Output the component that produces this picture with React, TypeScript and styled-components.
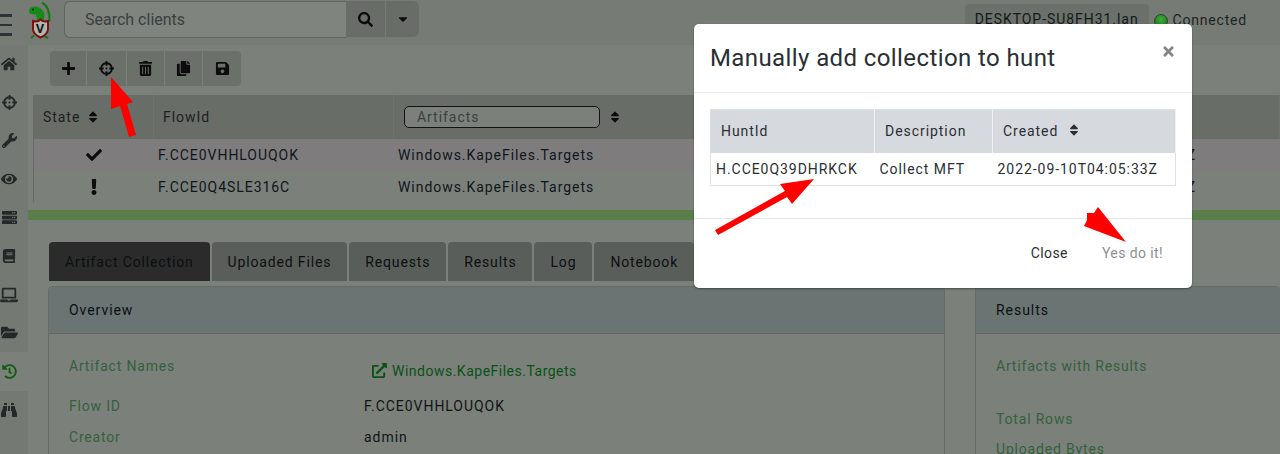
import React from "react";
import styled, { createGlobalStyle } from "styled-components";
import {
    FaBinoculars, FaBook, FaCaretDown, FaCheck, FaCopy, FaCrosshairs, FaExclamation,
    FaExternalLinkAlt, FaFolderOpen, FaHistory, FaHome, FaLaptop, FaPlus, FaSave, FaSearch,
    FaServer, FaSort, FaTimes, FaTrashAlt, FaWrench, FaEye,
} from "react-icons/fa";

const GlobalStyle = createGlobalStyle`
    html, body {
        margin: 0;
        height: 454px;
        overflow: hidden;
        background: #7b807b;
        font-family: Roboto, "Liberation Sans", sans-serif;
    }
    * { box-sizing: border-box; }
`;

const SIDE_ICONS = [
    { icon: FaHome, size: 16 },
    { icon: FaCrosshairs, size: 15 },
    { icon: FaWrench, size: 15 },
    { icon: FaEye, size: 16 },
    { icon: FaServer, size: 15 },
    { icon: FaBook, size: 14 },
    { icon: FaLaptop, size: 18 },
    { icon: FaFolderOpen, size: 17 },
    { icon: FaHistory, size: 15, active: true },
    { icon: FaBinoculars, size: 16 },
];

const TOOL_ICONS = [FaPlus, FaCrosshairs, FaTrashAlt, FaCopy, FaSave];
const TOOL_WIDTHS = [37, 40, 38, 38, 38];

const FLOWS = [
    { id: "F.CCE0VHHLOUQOK", icon: FaCheck, size: 16, selected: true },
    { id: "F.CCE0Q4SLE316C", icon: FaExclamation, size: 16, selected: false },
];

const TABS = [
    { label: "Artifact Collection", active: true },
    { label: "Uploaded Files" },
    { label: "Requests" },
    { label: "Results" },
    { label: "Log" },
    { label: "Notebook" },
];

const OVERVIEW = [
    { label: "Artifact Names", value: "", height: 40 },
    { label: "Flow ID", value: "F.CCE0VHHLOUQOK", height: 31 },
    { label: "Creator", value: "admin", height: 31 },
];

const Logo = () => (
    <svg width="24" height="40" viewBox="0 0 24 40">
        <path d="M14 2.5c5.5 3 8 9 7.500 19" fill="none" stroke="#137a13" strokeWidth="2" />
        <path d="M1 11c0-3 2.500-4.500 6-4.500 5 0 9 3.500 9.500 9l-1 4.500H9l-1-5.500c-4 0-7-.5-7-3.500z" fill="#168a16" />
        <circle cx="5" cy="9.500" r="1.100" fill="#0c2a0c" />
        <path d="M3 38l3-2.500M15 35.500l5 2.500" stroke="#137a13" strokeWidth="2" />
        <path d="M5 21c3 1 5.500 .5 7.500-1.500 2 2 4.500 2.500 7.500 1.500v8c0 3.500-3 6.500-7.500 8.500-4.500-2-7.500-5-7.500-8.500z" fill="#b4b4b0" stroke="#7d1010" strokeWidth="2" />
        <text x="12.500" y="33" textAnchor="middle" fontSize="13" fontWeight="700" fontFamily="Roboto" fill="#1a1a1a">V</text>
    </svg>
);

const Arrow = ({ points, left, top, w, h }: { points: string; left: number; top: number; w: number; h: number }) => (
    <ArrowBox width={w} height={h} $left={left} $top={top}>
        <polygon points={points} fill="#fe0000" />
    </ArrowBox>
);

const App: React.FunctionComponent = () => {
    return (
        <Page>
            <GlobalStyle />
            <TopBar>
                <Burger>
                    <BurgerLine />
                    <BurgerLine />
                    <BurgerLine />
                </Burger>
                <LogoSlot><Logo /></LogoSlot>
                <SearchBox>Search clients</SearchBox>
                <SearchButton><FaSearch size={15} /></SearchButton>
                <CaretButton><FaCaretDown size={14} /></CaretButton>
                <TopRight>
                    <HostChip>DESKTOP-SU8FH31.lan</HostChip>
                    <Dot />
                    <Status>Connected</Status>
                </TopRight>
            </TopBar>
            <Body>
                <SideBar>
                    {SIDE_ICONS.map((item, i) => (
                        <SideItem key={`side_${i}`} $active={item.active}>
                            <item.icon size={item.size} />
                        </SideItem>
                    ))}
                </SideBar>
                <Main>
                    <Toolbar>
                        {TOOL_ICONS.map((Icon, i) => (
                            <ToolButton key={`tool_${i}`} $width={TOOL_WIDTHS[i]}>
                                <Icon size={15} />
                            </ToolButton>
                        ))}
                    </Toolbar>
                    <FlowTable>
                        <HeadRow>
                            <HeadCell>State <SortIcon size={14} /></HeadCell>
                            <HeadCell>FlowId</HeadCell>
                            <FilterCell>
                                <FilterInput>Artifacts</FilterInput>
                                <SortIcon size={14} />
                            </FilterCell>
                        </HeadRow>
                        {FLOWS.map((flow) => (
                            <FlowRow key={flow.id} $selected={flow.selected}>
                                <StateCell><flow.icon size={flow.size} /></StateCell>
                                <Cell>{flow.id}</Cell>
                                <Cell>Windows.KapeFiles.Targets</Cell>
                                <TimeCell>2022-09-10T04:12:33Z</TimeCell>
                            </FlowRow>
                        ))}
                    </FlowTable>
                    <Splitter />
                    <Tabs>
                        {TABS.map((tab) => (
                            <Tab key={tab.label} $active={tab.active}>{tab.label}</Tab>
                        ))}
                    </Tabs>
                    <Cards>
                        <OverviewCard>
                            <CardHead>Overview</CardHead>
                            <CardBody>
                                {OVERVIEW.map((row) => (
                                    <InfoRow key={row.label} $height={row.height}>
                                        <InfoLabel>{row.label}</InfoLabel>
                                        {row.value ? (
                                            <InfoValue>{row.value}</InfoValue>
                                        ) : (
                                            <ArtifactLink>
                                                <FaExternalLinkAlt size={15} /> Windows.KapeFiles.Targets
                                            </ArtifactLink>
                                        )}
                                    </InfoRow>
                                ))}
                            </CardBody>
                        </OverviewCard>
                        <ResultsCard>
                            <CardHead>Results</CardHead>
                            <CardBody>
                                <InfoRow $height={53}><InfoLabel>Artifacts with Results</InfoLabel></InfoRow>
                                <InfoRow $height={30}><InfoLabel>Total Rows</InfoLabel></InfoRow>
                                <InfoRow $height={30}><InfoLabel>Uploaded Bytes</InfoLabel></InfoRow>
                            </CardBody>
                        </ResultsCard>
                    </Cards>
                </Main>
            </Body>

            <Modal>
                <ModalHead>
                    <ModalTitle>Manually add collection to hunt</ModalTitle>
                    <CloseX><FaTimes size={15} /></CloseX>
                </ModalHead>
                <ModalBody>
                    <HuntTable>
                        <thead>
                            <tr>
                                <HuntHead $width={164}>HuntId</HuntHead>
                                <HuntHead $width={118}>Description</HuntHead>
                                <HuntHead>Created <HuntSort size={14} /></HuntHead>
                            </tr>
                        </thead>
                        <tbody>
                            <tr>
                                <HuntCell>H.CCE0Q39DHRKCK</HuntCell>
                                <HuntCell>Collect MFT</HuntCell>
                                <HuntCell>2022-09-10T04:05:33Z</HuntCell>
                            </tr>
                        </tbody>
                    </HuntTable>
                </ModalBody>
                <ModalFoot>
                    <FootButton>Close</FootButton>
                    <FootButton $muted>Yes do it!</FootButton>
                </ModalFoot>
            </Modal>

            <Arrow left={105} top={70} w={34} h={70} points="6,7 28,32 22,34 31,65 24,67 15,36 6,39" />
            <Arrow left={712} top={170} w={104} h={70} points="102,9 80,34 75,27 6,65 3,60 73,21 68,14" />
            <Arrow left={1080} top={200} w={48} h={44} points="46,42 18,7 14,13 7,13 7,20 4,26" />
        </Page>
    );
};

const Page = styled.div`
    position: relative;
    width: 1280px;
    height: 454px;
    overflow: hidden;
    background: #7d827d;
    color: #111;
    letter-spacing: 0.95px;
`;

const TopBar = styled.div`
    height: 45px;
    display: flex;
    align-items: flex-start;
    background: #767b76;
`;

const Burger = styled.div`
    width: 28px;
    padding-top: 14px;
    display: flex;
    flex-direction: column;
    gap: 7px;
`;

const BurgerLine = styled.span`
    width: 12px;
    height: 2.500px;
    background: #2b3338;
`;

const LogoSlot = styled.div`
    width: 36px;
    height: 40px;
    display: flex;
`;

const SearchBox = styled.div`
    width: 282px;
    height: 37px;
    margin-top: 1px;
    padding: 0 20px;
    display: flex;
    align-items: center;
    background: #7f847f;
    border: 1px solid #5f645f;
    border-right: 0;
    border-radius: 6px 0 0 6px;
    color: #3a403e;
    font-size: 16px;
    letter-spacing: 0;
`;

const SearchButton = styled.div`
    width: 39px;
    height: 36px;
    margin-top: 1px;
    display: flex;
    align-items: center;
    justify-content: center;
    background: #686d68;
    color: #0c0c0c;
`;

const CaretButton = styled(SearchButton)`
    width: 33px;
    margin-left: 1px;
    border-radius: 0 6px 6px 0;
`;

const TopRight = styled.div`
    margin-left: auto;
    padding-right: 33px;
    display: flex;
    align-items: center;
    height: 30px;
    margin-top: 4px;
    font-size: 14px;
`;

const HostChip = styled.div`
    height: 30px;
    padding: 0 10px;
    display: flex;
    align-items: center;
    background: #6b706b;
    border-radius: 4px 4px 0 0;
    color: #14181a;
`;

const Dot = styled.span`
    width: 14px;
    height: 14px;
    margin: 3px 5px 0 5px;
    border-radius: 50%;
    background: radial-gradient(circle at 50% 35%, #3fae3a, #0f6a0f);
    border: 1px solid #2c452c;
`;

const Status = styled.span`
    color: #1a2523;
    letter-spacing: 0.8px;
    margin-top: 1px;
`;

const Body = styled.div`
    display: flex;
    height: 409px;
`;

const SideBar = styled.div`
    width: 28px;
    display: flex;
    flex-direction: column;
    background: #747974;
`;

const SideItem = styled.div<{ $active?: boolean }>`
    height: 38.4px;
    display: flex;
    align-items: center;
    justify-content: center;
    padding-right: 10px;
    color: ${(p) => (p.$active ? "#0f5f0f" : "#242828")};
    background: ${(p) => (p.$active ? "#7b807b" : "transparent")};
`;

const Main = styled.div`
    flex: 1;
    min-width: 0;
    padding-top: 6px;
    background: #7b807b;
`;

const Toolbar = styled.div`
    display: flex;
    width: 191px;
    height: 35px;
    margin-left: 22px;
    border-radius: 4px;
    overflow: hidden;
    background: #6b706b;
`;

const ToolButton = styled.div<{ $width: number }>`
    width: ${(p) => p.$width}px;
    display: flex;
    align-items: center;
    justify-content: center;
    color: #0c0c0c;
    border-right: 1px solid #7b807b;

    &:last-child { border-right: 0; }
`;

const FlowTable = styled.div`
    margin: 9px 0 0 5px;
    height: 107px;
    border-left: 1px solid #666b66;
`;

const COLUMNS = "120px 240px 1fr auto";

const HeadRow = styled.div`
    display: grid;
    grid-template-columns: ${COLUMNS};
    height: 44px;
    background: #686d68;
    color: #1c2020;
    font-size: 14px;
`;

const HeadCell = styled.div`
    display: flex;
    align-items: center;
    gap: 6px;
    padding-left: 9px;
    border-right: 1px solid #6d726d;
`;

const FilterCell = styled(HeadCell)`
    gap: 8px;
`;

const SortIcon = styled(FaSort)`
    color: #0c0c0c;
`;

const FilterInput = styled.div`
    width: 196px;
    height: 22px;
    padding-left: 12px;
    display: flex;
    align-items: center;
    background: #7b807b;
    border: 1px solid #131313;
    border-radius: 5px;
    color: #3a403e;
    margin-left: 1px;
`;

const FlowRow = styled.div<{ $selected?: boolean }>`
    display: grid;
    grid-template-columns: ${COLUMNS};
    align-items: center;
    height: 32px;
    background: ${(p) => (p.$selected ? "#7f7c7e" : "#7b807b")};
    font-size: 14px;
    color: #10161a;
`;

const Cell = styled.div`
    padding-left: 4px;
    white-space: nowrap;
`;

const StateCell = styled.div`
    display: flex;
    justify-content: center;
    color: #0c0c0c;
`;

const TimeCell = styled(Cell)`
    padding-right: 84px;
`;

const Splitter = styled.div`
    height: 10px;
    margin-top: 8px;
    background: #5a7e4a;
`;

const Tabs = styled.div`
    display: flex;
    gap: 2px;
    margin: 22px 0 0 21px;
    height: 39px;
`;

const Tab = styled.div<{ $active?: boolean }>`
    padding: 0 16px;
    display: flex;
    align-items: center;
    white-space: nowrap;
    border-radius: 4px 4px 0 0;
    font-size: 14px;
    letter-spacing: 0.85px;
    background: ${(p) => (p.$active ? "#2b2b2b" : "#5a5e5a")};
    color: #0c0f12;
`;

const Cards = styled.div`
    display: flex;
    gap: 30px;
    margin: 5px 0 0 20px;
`;

const Card = styled.div`
    border: 1px solid #666b66;
    border-radius: 4px 4px 0 0;
    height: 200px;
`;

const OverviewCard = styled(Card)`
    flex: 0 0 897px;
`;

const ResultsCard = styled(Card)`
    flex: 1;
    min-width: 0;
    border-right: 0;
`;

const CardHead = styled.div`
    height: 47px;
    padding-left: 20px;
    display: flex;
    align-items: center;
    background: #6a7473;
    border-bottom: 1px solid #5f6663;
    font-size: 14px;
    color: #0c0f12;
`;

const CardBody = styled.div`
    padding: 24px 20px 0;
    font-size: 14px;
`;

const InfoRow = styled.div<{ $height: number }>`
    display: flex;
    height: ${(p) => p.$height}px;
`;

const InfoLabel = styled.div`
    width: 295px;
    color: #34603c;
    letter-spacing: 0.82px;
`;

const InfoValue = styled.div`
    color: #101416;
`;

const ArtifactLink = styled.div`
    display: flex;
    align-items: center;
    gap: 5px;
    height: 21px;
    margin-top: 2px;
    margin-left: 8px;
    color: #0a5214;
    letter-spacing: 0.5px;
    white-space: nowrap;
`;

const Modal = styled.div`
    position: absolute;
    left: 694px;
    top: 24px;
    width: 498px;
    height: 264px;
    background: #fff;
    border-radius: 5px;
    box-shadow: 0 1px 2px rgba(0, 0, 0, 0.4);
    display: flex;
    flex-direction: column;
`;

const ModalHead = styled.div`
    height: 69px;
    padding: 16px 16px 0;
    display: flex;
    justify-content: space-between;
    border-bottom: 1px solid #e2e9e7;
`;

const ModalTitle = styled.div`
    font-size: 24px;
    line-height: 36px;
    letter-spacing: 0.4px;
    color: #2a2f33;
`;

const CloseX = styled.div`
    margin-top: 4px;
    color: #858585;
`;

const ModalBody = styled.div`
    height: 126px;
    padding: 16px 16px 0;
    border-bottom: 1px solid #e2e9e7;
`;

const HuntTable = styled.table`
    width: 466px;
    border-collapse: collapse;
    table-layout: fixed;
    font-size: 14px;
    color: #2a2f33;
    border: 1px solid #dee2e6;
`;

const HuntHead = styled.th<{ $width?: number }>`
    width: ${(p) => (p.$width ? `${p.$width}px` : "auto")};
    height: 43px;
    padding: 0 0 0 10px;
    text-align: left;
    font-weight: 400;
    background: #d6d9de;
    border-right: 1px solid #eef0f2;
`;

const HuntSort = styled(FaSort)`
    color: #2a2f33;
    margin-left: 4px;
    vertical-align: -1px;
`;

const HuntCell = styled.td`
    height: 33px;
    padding: 0 0 0 5px;
    white-space: nowrap;
`;

const ModalFoot = styled.div`
    flex: 1;
    display: flex;
    justify-content: flex-end;
    align-items: center;
    gap: 34px;
    padding: 0 29px 1px 0;
`;

const FootButton = styled.div<{ $muted?: boolean }>`
    font-size: 14px;
    letter-spacing: 0.4px;
    color: ${(p) => (p.$muted ? "#8d9091" : "#2a2f33")};
`;

const ArrowBox = styled.svg<{ $left: number; $top: number }>`
    position: absolute;
    left: ${(p) => p.$left}px;
    top: ${(p) => p.$top}px;
    overflow: visible;
`;

export default App;
